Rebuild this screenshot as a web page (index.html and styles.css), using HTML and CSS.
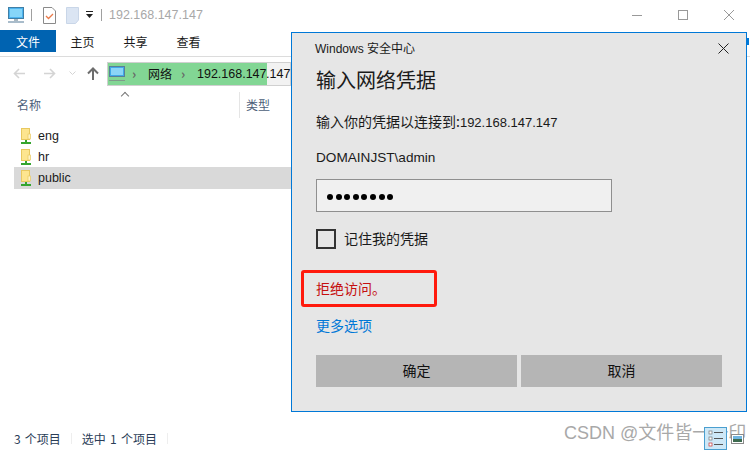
FILE: index.html
```html
<!DOCTYPE html>
<html lang="zh-CN">
<head>
    <meta charset="UTF-8">
    <title>192.168.147.147</title>
    <link rel="stylesheet" href="styles.css">
</head>
<body>
    <div class="explorer">
        <!-- Title bar -->
        <div class="titlebar">
            <svg class="qa-pc" width="17" height="17" viewBox="0 0 17 17">
                <rect x="0.5" y="0.5" width="15" height="11" fill="#4db4f0" stroke="#3f7fa6"/>
                <rect x="2" y="2" width="12" height="8" fill="#86d6f9"/>
                <rect x="6" y="12" width="4" height="2" fill="#a9b8c2"/>
                <rect x="0" y="14" width="16" height="2" fill="#a9bccb"/>
            </svg>
            <span class="qa-sep"></span>
            <svg class="qa-doc" width="13" height="17" viewBox="0 0 13 17">
                <path d="M0.5 0.5H9L12.5 4V16.5H0.5Z" fill="#fff" stroke="#8a8a8a"/>
                <path d="M3 9L5.5 11.5L10 7" fill="none" stroke="#ea7a4a" stroke-width="1.3"/>
            </svg>
            <svg class="qa-new" width="13" height="17" viewBox="0 0 13 17">
                <path d="M0.5 0.5H12.5V13L9.5 16.5H0.5Z" fill="#dbe5f3" stroke="#c9d6e8"/>
            </svg>
            <svg class="qa-down" width="8" height="8" viewBox="0 0 8 8">
                <rect x="0" y="0" width="7" height="1" fill="#222"/>
                <path d="M0 3H7L3.5 7Z" fill="#222"/>
            </svg>
            <span class="qa-sep"></span>
            <span class="title-text">192.168.147.147</span>
            <div class="win-controls">
                <svg width="10" height="10" viewBox="0 0 10 10"><rect x="0" y="5" width="10" height="1" fill="#999"/></svg>
                <svg width="10" height="10" viewBox="0 0 10 10"><rect x="0.5" y="0.5" width="9" height="9" fill="none" stroke="#999"/></svg>
                <svg width="10" height="10" viewBox="0 0 10 10"><path d="M0 0L10 10M10 0L0 10" stroke="#999"/></svg>
            </div>
        </div>

        <!-- Ribbon tabs -->
        <div class="ribbon">
            <span class="tab tab-file">文件</span>
            <span class="tab">主页</span>
            <span class="tab">共享</span>
            <span class="tab">查看</span>
            <span class="ribbon-help"></span>
        </div>

        <!-- Navigation row -->
        <div class="navrow">
            <svg class="nav-arrow" width="13" height="11" viewBox="0 0 13 11"><path d="M12 5.5H2M6 1L1.5 5.5L6 10" fill="none" stroke="#d4d4d4" stroke-width="1.6"/></svg>
            <svg class="nav-arrow" width="13" height="11" viewBox="0 0 13 11"><path d="M1 5.5H11M7 1L11.5 5.5L7 10" fill="none" stroke="#d4d4d4" stroke-width="1.6"/></svg>
            <svg class="nav-drop" width="7" height="5" viewBox="0 0 7 5"><path d="M0.5 0.5L3.5 3.5L6.5 0.5" fill="none" stroke="#d4d4d4"/></svg>
            <svg class="nav-up" width="12" height="13" viewBox="0 0 12 13"><path d="M6 13V2M1 6.5L6 1.5L11 6.5" fill="none" stroke="#6d6d6d" stroke-width="2"/></svg>
            <div class="address">
                <div class="address-mark">
                    <svg width="17" height="17" viewBox="0 0 17 17">
                        <rect x="1.5" y="1.5" width="15" height="10" fill="#3fa9e8" stroke="#5a7f98"/>
                        <rect x="3" y="3" width="12" height="7" fill="#8bd5f7"/>
                        <rect x="1" y="15" width="16" height="1" fill="#7f9a8a"/>
                    </svg>
                    <span class="crumb-sep">›</span>
                    <span class="crumb">网络</span>
                    <span class="crumb-sep">›</span>
                    <span class="crumb-ip">192.168.147</span>
                </div>
                <span class="crumb-ip crumb-tail">.147</span>
            </div>
        </div>

        <!-- File list -->
        <div class="list-head">
            <span class="sort-caret"></span>
            <span class="col-name">名称</span>
            <span class="col-type">类型</span>
        </div>
        <ul class="file-list">
            <li class="file-row">
                <svg class="share-icon" width="10" height="16" viewBox="0 0 10 16"><use href="#share"/></svg>
                eng
            </li>
            <li class="file-row">
                <svg class="share-icon" width="10" height="16" viewBox="0 0 10 16"><use href="#share"/></svg>
                hr
            </li>
            <li class="file-row selected">
                <svg class="share-icon" width="10" height="16" viewBox="0 0 10 16"><use href="#share"/></svg>
                public
            </li>
        </ul>

        <div class="statusbar">
            <span>3 个项目</span>
            <span class="status-sep"></span>
            <span>选中 1 个项目</span>
            <span class="status-sep"></span>
        </div>
    </div>

    <svg class="svg-defs" width="0" height="0">
        <symbol id="share" viewBox="0 0 10 16">
            <rect x="0.5" y="0.5" width="8" height="11" fill="#fde58f" stroke="#e8c860"/>
            <rect x="7" y="6" width="2.5" height="5" fill="#fff3c4" stroke="#e8c860" stroke-width="0.7"/>
            <rect x="4" y="12" width="2" height="2" fill="#35a52f"/>
            <rect x="0" y="14" width="10" height="2" fill="#35a52f"/>
        </symbol>
    </svg>

    <!-- Credentials dialog -->
    <div class="dialog">
        <div class="dialog-top">
            <span class="dialog-app">Windows 安全中心</span>
            <svg class="dialog-close" width="11" height="11" viewBox="0 0 11 11"><path d="M0.5 0.5L10.5 10.5M10.5 0.5L0.5 10.5" stroke="#222"/></svg>
        </div>
        <h2 class="dialog-title">输入网络凭据</h2>
        <p class="dialog-desc">输入你的凭据以连接到:<span class="dialog-ip">192.168.147.147</span></p>
        <p class="dialog-user">DOMAINJST\admin</p>
        <div class="password-box">
            <span class="dot"></span><span class="dot"></span><span class="dot"></span><span class="dot"></span>
            <span class="dot"></span><span class="dot"></span><span class="dot"></span><span class="dot"></span>
        </div>
        <label class="remember">
            <span class="checkbox"></span>
            <span class="remember-text">记住我的凭据</span>
        </label>
        <div class="error-text">拒绝访问。<span class="error-mark"></span></div>
        <a class="more-link">更多选项</a>
        <div class="dialog-buttons">
            <button class="dialog-button">确定</button>
            <button class="dialog-button">取消</button>
        </div>
    </div>

    <!-- Watermark and corner view buttons -->
    <div class="watermark">CSDN @文件皆一一印</div>
    <div class="view-buttons">
        <svg class="view-details" width="23" height="23" viewBox="0 0 23 23">
            <rect x="0.5" y="0.5" width="22" height="22" fill="#cde8f7" stroke="#4a9fd0"/>
            <rect x="5" y="4" width="3" height="3" fill="#fff" stroke="#777" stroke-width="0.7"/>
            <rect x="5" y="10" width="3" height="3" fill="#fff" stroke="#777" stroke-width="0.7"/>
            <rect x="5" y="16" width="3" height="3" fill="#fff" stroke="#c33" stroke-width="0.7"/>
            <path d="M10 5.5H19M10 11.5H19M10 17.5H19" stroke="#555"/>
        </svg>
        <svg width="13" height="10" viewBox="0 0 13 10">
            <rect x="0.5" y="0.5" width="12" height="9" fill="#fff" stroke="#8a8a8a"/>
            <rect x="2" y="2" width="9" height="3" fill="#6fb5e0"/>
            <rect x="2" y="5" width="9" height="3" fill="#3d6b4f"/>
        </svg>
    </div>
</body>
</html>
```

FILE: styles.css
```css
* {
    margin: 0;
    padding: 0;
    box-sizing: border-box;
}

body {
    width: 750px;
    height: 450px;
    overflow: hidden;
    background-color: white;
    color: #1a1a1a;
    font-family: 'Noto Sans CJK SC', 'Liberation Sans', sans-serif;
    font-size: 12px;
}

.explorer {
    display: flex;
    flex-direction: column;
    height: 450px;
}

/* Title bar */
.titlebar {
    display: flex;
    align-items: center;
    height: 30px;
    padding-left: 8px;
}

.qa-pc {
    margin-right: 6px;
}

.qa-sep {
    width: 1px;
    height: 12px;
    background-color: #a0a0a0;
}

.qa-doc {
    margin-left: 11px;
}

.qa-new {
    margin-left: 10px;
}

.qa-down {
    margin-left: 7px;
    margin-right: 7px;
}

.title-text {
    margin-left: 7px;
    color: #a8a8a8;
    font-family: 'Liberation Sans', sans-serif;
    font-size: 12.5px;
}

.win-controls {
    display: flex;
    gap: 36px;
    margin-left: auto;
    padding-right: 16px;
}

/* Ribbon */
.ribbon {
    display: flex;
    height: 27px;
    padding-bottom: 4px;
    border-bottom: 1px solid #dcdcdc;
}

.tab {
    display: flex;
    justify-content: center;
    align-items: center;
    width: 53px;
    font-size: 12px;
}

.tab-file {
    width: 56px;
    background-color: #0063b1;
    color: white;
}

/* only the edge of the help button shows past the dialog */
.ribbon-help {
    align-self: center;
    width: 2px;
    height: 7px;
    margin-left: auto;
    margin-right: 1px;
    background-color: #0078d7;
}

/* Navigation */
.navrow {
    display: flex;
    align-items: center;
    height: 33px;
    padding-left: 13px;
}

.nav-arrow {
    margin-right: 17px;
}

.nav-drop {
    margin-left: -4px;
    margin-right: 11px;
}

.nav-up {
    margin-right: 8px;
}

.address {
    display: flex;
    align-items: center;
    width: 184px;
    height: 24px;
    background-color: #f2f2f2;
    border: 1px solid #d0d0d0;
}

.address-mark {
    display: flex;
    flex: none;
    align-items: center;
    width: 159px;
    height: 22px;
    background-color: #82d694;
}

.crumb {
    color: #111;
    font-size: 12px;
}

.crumb-ip {
    color: #111;
    font-family: 'Liberation Sans', sans-serif;
    font-size: 12.5px;
}

.crumb-tail {
    margin-left: -1px;
}

.crumb-sep {
    width: 5px;
    margin-left: 7px;
    margin-right: 11px;
    color: #666;
    font-size: 13px;
    font-weight: bold;
}

.crumb + .crumb-sep {
    margin-left: 9px;
}

/* File list */
.list-head {
    position: relative;
    display: flex;
    height: 28px;
    margin-bottom: 7px;
    padding-left: 17px;
    align-items: flex-end;
    color: #4c607a;
}

.sort-caret {
    position: absolute;
    left: 122px;
    top: 3px;
    width: 6px;
    height: 6px;
    border-left: 1px solid #777;
    border-top: 1px solid #777;
    transform: rotate(45deg);
}

.col-name {
    width: 222px;
    padding-bottom: 5px;
}

.col-type {
    height: 26px;
    padding-left: 6px;
    padding-top: 4px;
    border-left: 1px solid #e5e5e5;
}

.file-list {
    list-style: none;
    flex: 1;
    width: 280px;
    margin-left: 14px;
}

.file-row {
    display: flex;
    align-items: center;
    gap: 7px;
    height: 21px;
    padding-left: 7px;
    font-family: 'Liberation Sans', sans-serif;
    font-size: 12.5px;
}

.file-row.selected {
    height: 22px;
    background-color: #d9d9d9;
}

.svg-defs {
    position: absolute;
}

.statusbar {
    display: flex;
    align-items: center;
    height: 24px;
    padding-left: 14px;
    color: #2a3d57;
    font-size: 12px;
    word-spacing: 1.5px;
}

.status-sep {
    width: 1px;
    height: 11px;
    margin-left: 10px;
    margin-right: 10px;
    background-color: #eeeeee;
}

/* Dialog */
.dialog {
    position: absolute;
    left: 291px;
    top: 32px;
    width: 456px;
    height: 380px;
    display: flex;
    flex-direction: column;
    padding: 0 24px;
    background-color: #e6e6e6;
    border: 1px solid #0078d7;
}

.dialog-top {
    display: flex;
    justify-content: space-between;
    align-items: center;
    height: 30px;
    margin-bottom: 3px;
}

.dialog-close {
    margin-right: -7px;
}

.dialog-app {
    margin-left: -1px;
    padding-bottom: 2px;
    font-size: 12px;
    font-family: 'Liberation Sans', 'Noto Sans CJK SC', sans-serif;
}

.dialog-title {
    height: 32px;
    font-size: 20px;
    font-weight: normal;
    line-height: 28px;
    margin-bottom: 13px;
}

.dialog-desc {
    height: 20px;
    font-size: 14px;
    line-height: 20px;
    margin-bottom: 17px;
}

.dialog-ip {
    font-family: 'Liberation Sans', sans-serif;
    font-size: 13px;
}

.dialog-user {
    height: 20px;
    font-family: 'Liberation Sans', sans-serif;
    font-size: 13.6px;
    line-height: 20px;
    margin-bottom: 11px;
}

.password-box {
    display: flex;
    align-items: center;
    gap: 2.6px;
    width: 296px;
    height: 33px;
    padding-left: 10px;
    padding-top: 3px;
    background-color: #f0f0f0;
    border: 1px solid #8f8f8f;
    margin-bottom: 17px;
}

.dot {
    width: 6px;
    height: 6px;
    border-radius: 50%;
    background-color: black;
}

.remember {
    display: flex;
    align-items: center;
    gap: 8px;
    height: 20px;
    font-size: 14px;
    margin-bottom: 29px;
}

.remember-text {
    margin-top: -3px;
}

.checkbox {
    width: 20px;
    height: 20px;
    border: 2px solid #333;
}

.error-text {
    position: relative;
    height: 20px;
    color: #c50f0f;
    font-size: 14px;
    line-height: 20px;
    margin-bottom: 17px;
}

/* red marker drawn over the screenshot */
.error-mark {
    position: absolute;
    left: -15px;
    top: -8px;
    width: 136px;
    height: 37px;
    border: 3px solid #ff1a0d;
    border-radius: 3px;
}

.more-link {
    height: 20px;
    color: #0078d7;
    font-size: 14px;
    line-height: 20px;
}

.dialog-buttons {
    display: flex;
    gap: 4px;
    margin-top: 20px;
}

.dialog-button {
    width: 201px;
    height: 32px;
    padding-bottom: 2px;
    border: none;
    background-color: #b5b5b5;
    color: #111;
    font-family: 'Noto Sans CJK SC', sans-serif;
    font-size: 14px;
}

/* Watermark */
.watermark {
    position: absolute;
    left: 564px;
    top: 418px;
    color: #9a9a9a;
    font-family: 'Liberation Sans', 'Noto Sans CJK SC', sans-serif;
    font-size: 18px;
    white-space: nowrap;
    opacity: 0.85;
}

.view-buttons {
    position: absolute;
    left: 704px;
    top: 427px;
    display: flex;
    align-items: center;
    gap: 4px;
}
```
